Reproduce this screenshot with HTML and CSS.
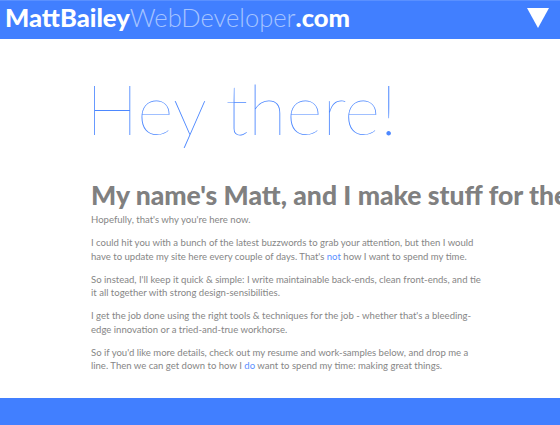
FILE: index.html
```html
<!DOCTYPE html>
<html>
<head>
<meta charset="utf-8">
<link rel="stylesheet" href="styles.css">
</head>
<body>
<div class="page">
  <header class="topbar">
    <div class="logo"><b>MattBailey</b><span class="light">WebDeveloper</span><b>.com</b></div>
    <svg class="menu" width="22" height="20" viewBox="0 0 22 20"><polygon points="0,0 22,0 11,20" fill="#ffffff"/></svg>
  </header>
  <main class="intro">
    <h1 class="hey">Hey there!</h1>
    <h2 class="name">My name's Matt, and I make stuff for the web.</h2>
    <p>Hopefully, that's why you're here now.</p>
    <p>I could hit you with a bunch of the latest buzzwords to grab your attention, but then I would have to update my site here every couple of days. That's <a href="#">not</a> how I want to spend my time.</p>
    <p>So instead, I'll keep it quick &amp; simple: I write maintainable back-ends, clean front-ends, and tie it all together with strong design-sensibilities.</p>
    <p>I get the job done using the right tools &amp; techniques for the job - whether that's a bleeding-edge innovation or a tried-and-true workhorse.</p>
    <p>So if you'd like more details, check out my resume and work-samples below, and drop me a line. Then we can get down to how I <a href="#">do</a> want to spend my time: making great things.</p>
  </main>
  <footer class="bottombar"></footer>
</div>
</body>
</html>
```
FILE: styles.css
```css
html, body {
  margin: 0;
  padding: 0;
  background: #ffffff;
  overflow: hidden;
}
.page {
  width: 560px;
  height: 425px;
  overflow: hidden;
  font-family: Lato, "Open Sans", sans-serif;
}
.topbar {
  height: 39px;
  background: #417fff;
  border-top: 1px solid #5a90ff;
  box-sizing: border-box;
  display: flex;
  align-items: flex-start;
  justify-content: space-between;
  padding: 0 11px 0 5px;
}
.logo {
  font-size: 25.5px;
  line-height: 33px;
  color: #ffffff;
  white-space: nowrap;
}
.logo b {
  font-weight: 900;
}
.logo .light {
  font-weight: 300;
  color: #a6c4ff;
}
.menu {
  margin-top: 7px;
}
.intro {
  box-sizing: border-box;
  height: 359px;
  padding: 27px 0 0 91px;
  width: 486px;
}
.hey {
  margin: 0 0 0 -5px;
  font-size: 70px;
  line-height: 84px;
  font-weight: 100;
  color: #4d88ff;
  white-space: nowrap;
}
.name {
  margin: 30px 0 3px;
  font-size: 26.5px;
  line-height: 30px;
  font-weight: 900;
  color: #808080;
  white-space: nowrap;
}
.intro p {
  margin: 0 0 9.5px;
  font-size: 9.55px;
  line-height: 13.5px;
  color: #868686;
}
.intro a {
  color: #5a8fff;
  text-decoration: none;
}
.bottombar {
  height: 40px;
  background: #417fff;
}
```
